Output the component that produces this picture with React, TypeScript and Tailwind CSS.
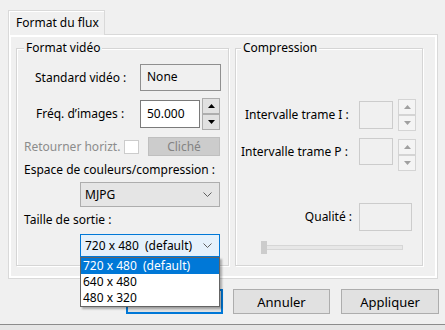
import React from "react";

function Chevron() {
  return (
    <svg width="9" height="5" viewBox="0 0 9 5">
      <polyline points="0.5,0.5 4.5,4.5 8.5,0.5" fill="none" stroke="#5f5f5f" strokeWidth="1" />
    </svg>
  );
}

function Tri({ up, color }: { up: boolean; color: string }) {
  return (
    <svg width="7" height="4" viewBox="0 0 7 4">
      <polygon points={up ? "0,4 7,4 3.5,0" : "0,0 7,0 3.5,4"} fill={color} />
    </svg>
  );
}

function Spin({ enabled, h }: { enabled: boolean; h: number }) {
  const cls = enabled
    ? "w-[18px] flex items-center justify-center border border-[#adadad] bg-[#e1e1e1]"
    : "w-[18px] flex items-center justify-center border border-[#d4d4d4] bg-[#f4f4f4]";
  const color = enabled ? "#000" : "#a0a0a0";
  return (
    <div className="flex flex-col">
      <div className={cls} style={{ height: h }}>
        <Tri up color={color} />
      </div>
      <div className={cls} style={{ height: h }}>
        <Tri up={false} color={color} />
      </div>
    </div>
  );
}

const group =
  "relative shadow-[inset_0_0_0_1px_#d5d5d5,inset_2px_2px_0_0_#ffffff,1px_1px_0_0_#ffffff]";

export default function App() {
  return (
    <div className="relative w-[445px] h-[330px] overflow-hidden bg-[#f0f0f0] font-['Noto_Sans',sans-serif] text-[12px] leading-[16px] text-black">
      {/* tab row */}
      <div className="pt-[10px] pl-[8px] flex">
        <div className="relative z-10 -mb-[1px] w-[97px] h-[25px] border-l border-t border-r border-[#d9d9d9] bg-[#f0f0f0] pl-[7px] pt-[4px] shadow-[inset_1px_1px_0_0_#ffffff] whitespace-nowrap">
          Format du flux
        </div>
      </div>

      {/* panel */}
      <div className="ml-[8px] w-[430px] h-[245px] border border-[#d9d9d9] shadow-[inset_0_0_0_2px_#ffffff] flex pt-[13px] pl-[7px]">
        {/* Format vidéo */}
        <div className={group + " w-[213px] h-[218px] flex flex-col z-20"}>
          <span className="absolute left-[8px] -top-[8px] px-[2px] bg-[#f0f0f0] whitespace-nowrap">Format vidéo</span>

          <div className="mt-[16px] h-[27px] flex items-center">
            <span className="w-[124px] pl-[19px] whitespace-nowrap">Standard vidéo :</span>
            <div className="w-[81px] h-[27px] border border-[#8f8f8f] bg-[#f0f0f0] pl-[6px] pt-[4px]">None</div>
          </div>

          <div className="mt-[7px] h-[32px] flex items-center">
            <span className="w-[124px] pl-[20px] whitespace-nowrap">Fréq. d’images :</span>
            <div className="w-[60px] h-[28px] border border-[#7a7a7a] bg-white pl-[6px] pt-[5px]">50.000</div>
            <div className="ml-[2px]">
              <Spin enabled h={16} />
            </div>
          </div>

          <div className="mt-[7px] h-[19px] flex items-center">
            <span className="w-[108px] pl-[8px] text-[#8c8c8c] whitespace-nowrap">Retourner horizt.</span>
            <div className="w-[15px] h-[14px] border border-[#cccccc] bg-white" />
            <div className="ml-[9px] w-[72px] h-[19px] bg-[#cccccc] border border-[#bfbfbf] flex items-center justify-center text-[#838383]">
              Cliché
            </div>
          </div>

          <div className="mt-[6px] h-[16px] pl-[8px] whitespace-nowrap">Espace de couleurs/compression :</div>

          <div className="mt-[4px] ml-[64px] w-[140px] h-[25px] border border-[#adadad] bg-[#e5e5e5] flex items-center justify-between pl-[4px] pr-[7px]">
            <span>MJPG</span>
            <Chevron />
          </div>

          <div className="mt-[5px] h-[16px] pl-[8px] whitespace-nowrap">Taille de sortie :</div>

          <div className="relative mt-[6px] ml-[64px] w-[140px]">
            <div className="h-[23px] border border-[#0078d7] bg-[#e5f1fb] flex items-center justify-between pl-[4px] pr-[7px]">
              <span className="whitespace-pre">720 x 480  (default)</span>
              <Chevron />
            </div>
            {/* dropdown list */}
            <div className="absolute left-0 top-[23px] w-[140px] border border-[#646464] bg-white shadow-[2px_2px_2px_rgba(0,0,0,0.3)] flex flex-col">
              <div className="h-[16px] bg-[#0078d7] text-white pl-[2px] whitespace-pre">720 x 480  (default)</div>
              <div className="h-[16px] pl-[2px]">640 x 480</div>
              <div className="h-[16px] pl-[2px]">480 x 320</div>
            </div>
          </div>
        </div>

        {/* Compression */}
        <div className={group + " ml-[6px] w-[188px] h-[218px] flex flex-col"}>
          <span className="absolute left-[6px] -top-[8px] px-[2px] bg-[#f0f0f0] whitespace-nowrap">Compression</span>

          <div className="mt-[51px] h-[32px] flex items-center">
            <span className="w-[124px] pl-[10px] whitespace-nowrap">Intervalle trame I :</span>
            <div className="w-[34px] h-[28px] border border-[#cccccc] bg-[#f0f0f0]" />
            <div className="ml-[5px]">
              <Spin enabled={false} h={16} />
            </div>
          </div>

          <div className="mt-[7px] h-[33px] flex items-start">
            <span className="w-[124px] pl-[6px] mt-[6px] whitespace-nowrap">Intervalle trame P :</span>
            <div className="w-[34px] h-[27px] border border-[#cccccc] bg-[#f0f0f0]" />
            <div className="ml-[5px] mt-[1px]">
              <Spin enabled={false} h={16} />
            </div>
          </div>

          <div className="mt-[32px] h-[28px] flex items-center">
            <span className="w-[124px] pr-[7px] text-right">Qualité :</span>
            <div className="w-[53px] h-[28px] border border-[#cccccc] bg-[#f0f0f0]" />
          </div>

          <div className="relative mt-[10px] ml-[26px] w-[142px] h-[13px] flex items-center">
            <div className="ml-[2px] w-[140px] h-[5px] border border-[#d6d6d6] bg-[#e7e7e7]" />
            <div className="absolute left-0 top-0 w-[6px] h-[13px] bg-[#cccccc]" />
          </div>
        </div>
      </div>

      {/* buttons */}
      <div className="mt-[10px] pl-[126px] flex">
        <div className="w-[97px] h-[25px] border-2 border-[#0078d7] bg-[#e1e1e1] flex items-center justify-center">OK</div>
        <div className="ml-[10px] w-[97px] h-[25px] border border-[#adadad] bg-[#e1e1e1] flex items-center justify-center text-[13px]">
          Annuler
        </div>
        <div className="ml-[11px] w-[98px] h-[25px] border border-[#adadad] bg-[#e1e1e1] flex items-center justify-center text-[13px]">
          Appliquer
        </div>
      </div>

      <div className="mt-[10px] h-[10px] border-t border-[#8c8c8c] bg-[#e6e6e6]" />
    </div>
  );
}
